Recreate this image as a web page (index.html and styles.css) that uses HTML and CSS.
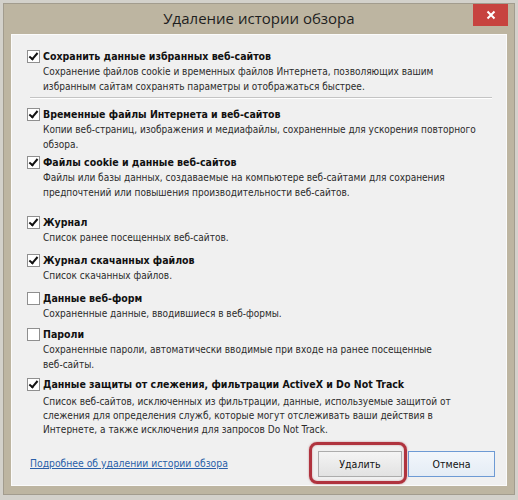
FILE: index.html
```html
<!DOCTYPE html>
<html lang="ru">
<head>
<meta charset="utf-8">
<title>Удаление истории обзора</title>
<link rel="stylesheet" href="styles.css">
</head>
<body>
<div class="window">
  <div class="titlebar">
    <div class="title">Удаление истории обзора</div>
    <button class="close" aria-label="Закрыть">
      <svg width="10" height="10" viewBox="0 0 10 10"><path d="M1.5 1.5 L8.5 8.5 M8.5 1.5 L1.5 8.5" stroke="#fff" stroke-width="2" fill="none"/></svg>
    </button>
  </div>
  <div class="panel">
    <div class="item i1">
      <div class="label"><span class="cb on"></span>Сохранить данные избранных веб-сайтов</div>
      <div class="desc">Сохранение файлов cookie и временных файлов Интернета, позволяющих вашим<br>избранным сайтам сохранять параметры и отображаться быстрее.</div>
    </div>
    <div class="sep"></div>
    <div class="item i2">
      <div class="label"><span class="cb on"></span>Временные файлы Интернета и веб-сайтов</div>
      <div class="desc">Копии веб-страниц, изображения и медиафайлы, сохраненные для ускорения повторного<br>обзора.</div>
    </div>
    <div class="item i3">
      <div class="label"><span class="cb on"></span>Файлы cookie и данные веб-сайтов</div>
      <div class="desc">Файлы или базы данных, создаваемые на компьютере веб-сайтами для сохранения<br>предпочтений или повышения производительности веб-сайтов.</div>
    </div>
    <div class="item i4">
      <div class="label"><span class="cb on"></span>Журнал</div>
      <div class="desc">Список ранее посещенных веб-сайтов.</div>
    </div>
    <div class="item i5">
      <div class="label"><span class="cb on"></span>Журнал скачанных файлов</div>
      <div class="desc">Список скачанных файлов.</div>
    </div>
    <div class="item i6">
      <div class="label"><span class="cb"></span>Данные веб-форм</div>
      <div class="desc">Сохраненные данные, вводившиеся в веб-формы.</div>
    </div>
    <div class="item i7">
      <div class="label"><span class="cb"></span>Пароли</div>
      <div class="desc">Сохраненные пароли, автоматически вводимые при входе на ранее посещенные<br>веб-сайты.</div>
    </div>
    <div class="item i8">
      <div class="label"><span class="cb on"></span>Данные защиты от слежения, фильтрации ActiveX и Do Not Track</div>
      <div class="desc tight">Список веб-сайтов, исключенных из фильтрации, данные, используемые защитой от<br>слежения для определения служб, которые могут отслеживать ваши действия в<br>Интернете, а также исключения для запросов Do Not Track.</div>
    </div>
    <div class="footer">
      <a class="link" href="#">Подробнее об удалении истории обзора</a>
      <div class="buttons">
        <div class="highlight"><button class="btn primary">Удалить</button></div>
        <button class="btn cancel">Отмена</button>
      </div>
    </div>
  </div>
</div>
</body>
</html>
```
FILE: styles.css
```css
html, body {
  margin: 0;
  padding: 0;
}
body {
  width: 518px;
  height: 500px;
  background: #d3d1cb;
  overflow: hidden;
  font-family: "DejaVu Sans Condensed", "DejaVu Sans", sans-serif;
}
.window {
  margin: 3px;
  width: 496px;
  height: 482px;
  border: 1px solid #a29c8e;
  background: #bdb5a1;
  padding: 0 7px 8px 7px;
}
.titlebar {
  height: 30px;
  display: flex;
  align-items: center;
  justify-content: center;
  position: relative;
}
.title {
  font-family: "Open Sans", "Noto Sans", sans-serif;
  font-size: 15px;
  color: #1e1e1e;
  margin-top: -3px;
}
.close {
  position: absolute;
  right: -1px;
  top: 0;
  width: 35px;
  height: 22px;
  border: none;
  background: #c7433f;
  padding: 0;
  display: flex;
  align-items: center;
  justify-content: center;
}
.panel {
  box-sizing: border-box;
  width: 496px;
  height: 452px;
  background: #f0f0f0;
  border: 1px solid #fbfbfb;
  padding: 13px 0 0 15px;
  color: #1a1a1a;
}
.item {
  font-size: 10px;
  white-space: nowrap;
}
.label {
  display: flex;
  align-items: center;
  height: 16px;
  font-weight: bold;
  font-size: 10.5px;
  color: #111;
}
.cb {
  box-sizing: border-box;
  width: 13px;
  height: 13px;
  border: 1px solid #8f8f8f;
  background: #fff;
  margin-right: 3px;
  position: relative;
  flex: none;
}
.cb.on::after {
  content: "";
  position: absolute;
  left: 3px;
  top: 0px;
  width: 3px;
  height: 7px;
  border: solid #111;
  border-width: 0 2px 2px 0;
  transform: rotate(40deg);
}
.desc {
  padding-left: 16px;
  line-height: 15px;
  color: #2b2b2b;
}
.desc.tight {
  line-height: 14px;
  margin-top: 3px;
}
.sep {
  height: 1px;
  background: #c4c4c4;
  border-bottom: 1px solid #fff;
  margin: 3px 14px 7px 3px;
}
.i3 { margin-top: 2px; }
.i4 { margin-top: 14px; }
.i5 { margin-top: 7px; }
.i6 { margin-top: 7px; }
.i7 { margin-top: 5px; }
.i8 { margin-top: 4px; }
.footer {
  display: flex;
  align-items: flex-start;
  justify-content: space-between;
  margin-top: 14px;
  padding-right: 11px;
}
.link {
  font-size: 10.3px;
  line-height: 14px;
  margin-top: 5px;
  color: #2a5fa8;
  text-decoration: underline;
  margin-left: 3px;
}
.buttons {
  display: flex;
  align-items: center;
  gap: 6px;
}
.highlight {
  position: relative;
  display: flex;
}
.highlight::after {
  content: "";
  position: absolute;
  left: -9px;
  right: -5px;
  top: -9px;
  bottom: -7px;
  border: 3px solid #b0333e;
  border-radius: 8px;
  box-shadow: 0 0 2px rgba(150, 30, 40, 0.5), inset 0 0 2px rgba(150, 30, 40, 0.4);
  pointer-events: none;
}
.btn {
  font-family: "DejaVu Sans Condensed", "DejaVu Sans", sans-serif;
  font-size: 10.5px;
  width: 84px;
  height: 26px;
  background: linear-gradient(#f4f4f4, #e2e2e2);
  border: 1px solid #acacac;
  color: #111;
}
.btn.cancel {
  width: 87px;
  border-color: #6d9ad4;
  background: linear-gradient(#f2f6fb, #e4ecf5);
}
```
